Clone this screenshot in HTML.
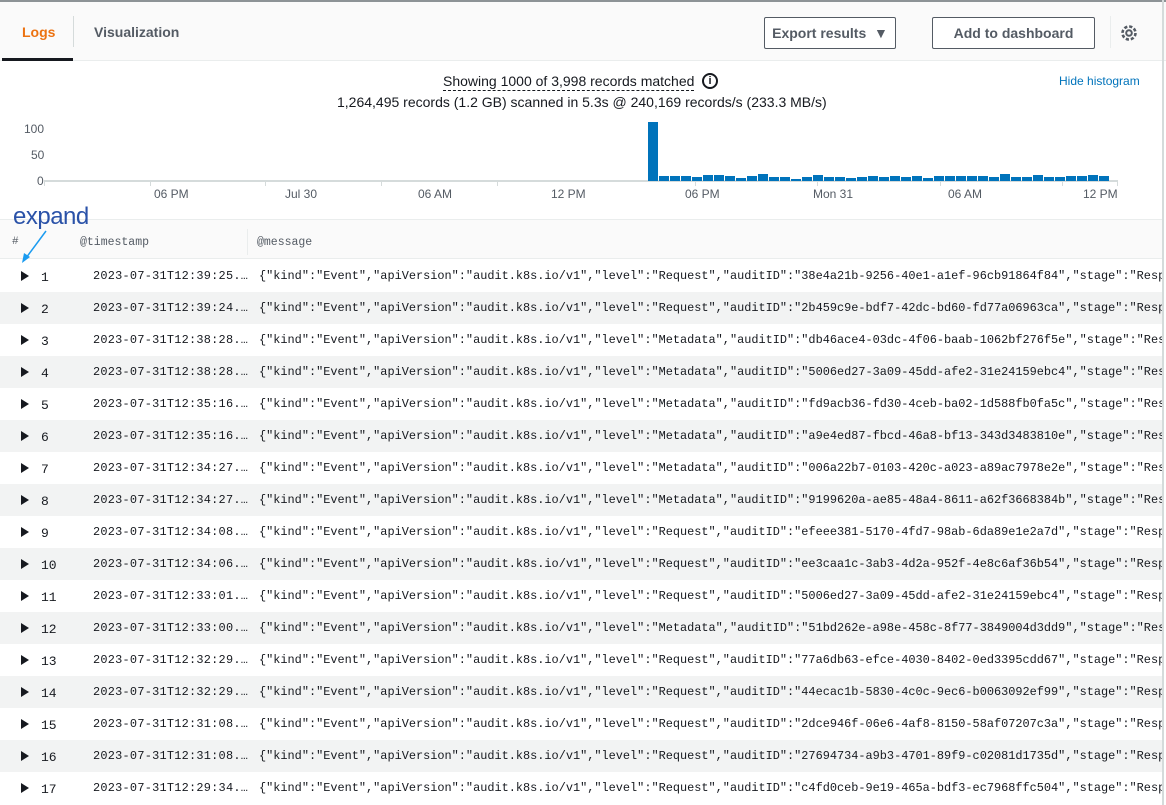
<!DOCTYPE html>
<html><head><meta charset="utf-8"><style>
*{margin:0;padding:0;box-sizing:border-box}
body{width:1166px;height:805px;overflow:hidden;background:#fff;font-family:"Liberation Sans",sans-serif;color:#16191f;position:relative}
.top{position:absolute;left:0;top:0;width:1166px;height:61px;background:#fafafa;border-top:2px solid #8d9396;border-bottom:1px solid #eaeded}
.tab{position:absolute;top:22px;font-weight:bold;font-size:14px}
.btn{position:absolute;top:15px;height:32px;border:1px solid #545b64;border-radius:2px;background:#fff;font-weight:bold;font-size:14px;color:#545b64;text-align:center;line-height:30px}
.mono{font-family:"Liberation Mono",monospace;font-size:11.9px;color:#16191f}
.row{position:absolute;left:0;width:1162px;height:32px;overflow:hidden;white-space:nowrap}
.row.g{background:#f2f3f3}
.row .tri{position:absolute;left:21px;top:11px;width:0;height:0;border-left:8px solid #16191f;border-top:5px solid transparent;border-bottom:5px solid transparent}
.row .n{position:absolute;left:41px;top:10px;font-size:13px;color:#16191f}
.row .ts{position:absolute;left:93px;top:9px;letter-spacing:0.25px}
.row .msg{position:absolute;left:259px;top:9px}
.ax{position:absolute;font-size:12px;color:#545b64}
</style></head><body>
<div class="top">
 <div class="tab" style="left:22px;color:#ec7211">Logs</div>
 <div style="position:absolute;left:73px;top:14px;width:1px;height:31px;background:#d5dbdb"></div>
 <div class="tab" style="left:94px;color:#545b64">Visualization</div>
 <div style="position:absolute;left:2px;top:56px;width:71px;height:3px;background:#16191f"></div>
 <div class="btn" style="left:764px;width:132px">Export results &nbsp;▼</div>
 <div class="btn" style="left:932px;width:163px">Add to dashboard</div>
 <div style="position:absolute;left:1110px;top:14px;width:1px;height:32px;background:#eaeded"></div>
 <svg style="position:absolute;left:1119px;top:21px" width="20" height="20" viewBox="0 0 20 20"><circle cx="10" cy="10" r="2.8" fill="none" stroke="#545b64" stroke-width="2"/><circle cx="10" cy="10" r="6.5" fill="none" stroke="#545b64" stroke-width="2.6" stroke-dasharray="3.2 1.9"/></svg>
</div>
<div style="position:absolute;left:1162px;top:0;width:2px;height:805px;background:#d5dbdb"></div>
<div style="position:absolute;left:443px;top:73px;font-size:14px;border-bottom:1px dashed #16191f;line-height:17px">Showing 1000 of 3,998 records matched</div>
<div style="position:absolute;left:702px;top:73px;width:16px;height:16px;border:2px solid #16191f;border-radius:50%;font-size:11px;font-weight:bold;text-align:center;line-height:12px">i</div>
<div style="position:absolute;left:337px;top:94px;font-size:14px">1,264,495 records (1.2 GB) scanned in 5.3s @ 240,169 records/s (233.3 MB/s)</div>
<div style="position:absolute;left:1059px;top:74px;font-size:12px;color:#0073bb">Hide histogram</div>
<div class="ax" style="left:24px;top:122px">100</div>
<div class="ax" style="left:31px;top:148px">50</div>
<div class="ax" style="left:37px;top:174px">0</div>
<svg style="position:absolute;left:0;top:110px" width="1166" height="100">
<line x1="44" y1="71" x2="1118" y2="71" stroke="#d5dbdb" stroke-width="2"/>
<g stroke="#d5dbdb" stroke-width="1"><line x1="44.5" y1="71" x2="44.5" y2="76"/><line x1="150.5" y1="71" x2="150.5" y2="76"/><line x1="265.5" y1="71" x2="265.5" y2="76"/><line x1="381.5" y1="71" x2="381.5" y2="76"/><line x1="497.5" y1="71" x2="497.5" y2="76"/><line x1="695.5" y1="71" x2="695.5" y2="76"/><line x1="817.5" y1="71" x2="817.5" y2="76"/><line x1="940.5" y1="71" x2="940.5" y2="76"/><line x1="1062.5" y1="71" x2="1062.5" y2="76"/><line x1="1117.5" y1="71" x2="1117.5" y2="76"/></g>
<g fill="#0073bb">
<rect x="648" y="12" width="10" height="59"/>
<rect x="659" y="66" width="10" height="5"/><rect x="670" y="66" width="10" height="5"/><rect x="681" y="66" width="10" height="5"/><rect x="692" y="67" width="10" height="4"/><rect x="703" y="65" width="10" height="6"/><rect x="714" y="65" width="10" height="6"/><rect x="725" y="66" width="10" height="5"/><rect x="736" y="68" width="10" height="3"/><rect x="747" y="66" width="10" height="5"/><rect x="758" y="64" width="10" height="7"/><rect x="769" y="67" width="10" height="4"/><rect x="780" y="67" width="10" height="4"/><rect x="791" y="69" width="10" height="2"/><rect x="802" y="67" width="10" height="4"/><rect x="813" y="65" width="10" height="6"/><rect x="824" y="67" width="10" height="4"/><rect x="835" y="67" width="10" height="4"/><rect x="846" y="68" width="10" height="3"/><rect x="857" y="67" width="10" height="4"/><rect x="868" y="66" width="10" height="5"/><rect x="879" y="67" width="10" height="4"/><rect x="890" y="66" width="10" height="5"/><rect x="901" y="67" width="10" height="4"/><rect x="912" y="66" width="10" height="5"/><rect x="923" y="68" width="10" height="3"/><rect x="934" y="66" width="10" height="5"/><rect x="945" y="66" width="10" height="5"/><rect x="956" y="66" width="10" height="5"/><rect x="967" y="66" width="10" height="5"/><rect x="978" y="66" width="10" height="5"/><rect x="989" y="67" width="10" height="4"/><rect x="1000" y="64" width="10" height="7"/><rect x="1011" y="67" width="10" height="4"/><rect x="1022" y="67" width="10" height="4"/><rect x="1033" y="65" width="10" height="6"/><rect x="1044" y="67" width="10" height="4"/><rect x="1055" y="67" width="10" height="4"/><rect x="1066" y="66" width="10" height="5"/><rect x="1077" y="66" width="10" height="5"/><rect x="1088" y="65" width="10" height="6"/><rect x="1099" y="66" width="10" height="5"/>
</g></svg>
<div class="ax" style="left:154px;top:187px">06 PM</div>
<div class="ax" style="left:285px;top:187px">Jul 30</div>
<div class="ax" style="left:418px;top:187px">06 AM</div>
<div class="ax" style="left:551px;top:187px">12 PM</div>
<div class="ax" style="left:685px;top:187px">06 PM</div>
<div class="ax" style="left:813px;top:187px">Mon 31</div>
<div class="ax" style="left:948px;top:187px">06 AM</div>
<div class="ax" style="left:1083px;top:187px">12 PM</div>
<div style="position:absolute;left:0;top:219px;width:1162px;height:40px;background:#fafafa;border-top:1px solid #eaeded;border-bottom:1px solid #eaeded"></div>
<div class="mono" style="position:absolute;left:12px;top:236px;font-size:11px;color:#545b64">#</div>
<div class="mono" style="position:absolute;left:80px;top:236px;font-size:11.5px;color:#545b64">@timestamp</div>
<div style="position:absolute;left:247px;top:229px;width:1px;height:26px;background:#eaeded"></div>
<div class="mono" style="position:absolute;left:257px;top:236px;font-size:11.5px;color:#545b64">@message</div>
<div style="position:absolute;left:13px;top:203px;font-size:24px;color:#2a52a8;letter-spacing:-0.5px">expand</div>
<svg style="position:absolute;left:15px;top:226px" width="40" height="40"><line x1="31" y1="5" x2="11" y2="32" stroke="#1a9bf0" stroke-width="1.5"/><polygon points="7,37 9,27 15,31" fill="#1a9bf0"/></svg>

<div class="row mono" style="top:260px"><div class="tri"></div><div class="n">1</div><div class="ts">2023-07-31T12:39:25.…</div><div class="msg">{"kind":"Event","apiVersion":"audit.k8s.io/v1","level":"Request","auditID":"38e4a21b-9256-40e1-a1ef-96cb91864f84","stage":"ResponseComplete"}</div></div>
<div class="row mono g" style="top:292px"><div class="tri"></div><div class="n">2</div><div class="ts">2023-07-31T12:39:24.…</div><div class="msg">{"kind":"Event","apiVersion":"audit.k8s.io/v1","level":"Request","auditID":"2b459c9e-bdf7-42dc-bd60-fd77a06963ca","stage":"ResponseComplete"}</div></div>
<div class="row mono" style="top:324px"><div class="tri"></div><div class="n">3</div><div class="ts">2023-07-31T12:38:28.…</div><div class="msg">{"kind":"Event","apiVersion":"audit.k8s.io/v1","level":"Metadata","auditID":"db46ace4-03dc-4f06-baab-1062bf276f5e","stage":"ResponseComplete"}</div></div>
<div class="row mono g" style="top:356px"><div class="tri"></div><div class="n">4</div><div class="ts">2023-07-31T12:38:28.…</div><div class="msg">{"kind":"Event","apiVersion":"audit.k8s.io/v1","level":"Metadata","auditID":"5006ed27-3a09-45dd-afe2-31e24159ebc4","stage":"ResponseComplete"}</div></div>
<div class="row mono" style="top:388px"><div class="tri"></div><div class="n">5</div><div class="ts">2023-07-31T12:35:16.…</div><div class="msg">{"kind":"Event","apiVersion":"audit.k8s.io/v1","level":"Metadata","auditID":"fd9acb36-fd30-4ceb-ba02-1d588fb0fa5c","stage":"ResponseComplete"}</div></div>
<div class="row mono g" style="top:420px"><div class="tri"></div><div class="n">6</div><div class="ts">2023-07-31T12:35:16.…</div><div class="msg">{"kind":"Event","apiVersion":"audit.k8s.io/v1","level":"Metadata","auditID":"a9e4ed87-fbcd-46a8-bf13-343d3483810e","stage":"ResponseComplete"}</div></div>
<div class="row mono" style="top:452px"><div class="tri"></div><div class="n">7</div><div class="ts">2023-07-31T12:34:27.…</div><div class="msg">{"kind":"Event","apiVersion":"audit.k8s.io/v1","level":"Metadata","auditID":"006a22b7-0103-420c-a023-a89ac7978e2e","stage":"ResponseComplete"}</div></div>
<div class="row mono g" style="top:484px"><div class="tri"></div><div class="n">8</div><div class="ts">2023-07-31T12:34:27.…</div><div class="msg">{"kind":"Event","apiVersion":"audit.k8s.io/v1","level":"Metadata","auditID":"9199620a-ae85-48a4-8611-a62f3668384b","stage":"ResponseComplete"}</div></div>
<div class="row mono" style="top:516px"><div class="tri"></div><div class="n">9</div><div class="ts">2023-07-31T12:34:08.…</div><div class="msg">{"kind":"Event","apiVersion":"audit.k8s.io/v1","level":"Request","auditID":"efeee381-5170-4fd7-98ab-6da89e1e2a7d","stage":"ResponseComplete"}</div></div>
<div class="row mono g" style="top:548px"><div class="tri"></div><div class="n">10</div><div class="ts">2023-07-31T12:34:06.…</div><div class="msg">{"kind":"Event","apiVersion":"audit.k8s.io/v1","level":"Request","auditID":"ee3caa1c-3ab3-4d2a-952f-4e8c6af36b54","stage":"ResponseComplete"}</div></div>
<div class="row mono" style="top:580px"><div class="tri"></div><div class="n">11</div><div class="ts">2023-07-31T12:33:01.…</div><div class="msg">{"kind":"Event","apiVersion":"audit.k8s.io/v1","level":"Request","auditID":"5006ed27-3a09-45dd-afe2-31e24159ebc4","stage":"ResponseComplete"}</div></div>
<div class="row mono g" style="top:612px"><div class="tri"></div><div class="n">12</div><div class="ts">2023-07-31T12:33:00.…</div><div class="msg">{"kind":"Event","apiVersion":"audit.k8s.io/v1","level":"Metadata","auditID":"51bd262e-a98e-458c-8f77-3849004d3dd9","stage":"ResponseComplete"}</div></div>
<div class="row mono" style="top:644px"><div class="tri"></div><div class="n">13</div><div class="ts">2023-07-31T12:32:29.…</div><div class="msg">{"kind":"Event","apiVersion":"audit.k8s.io/v1","level":"Request","auditID":"77a6db63-efce-4030-8402-0ed3395cdd67","stage":"ResponseComplete"}</div></div>
<div class="row mono g" style="top:676px"><div class="tri"></div><div class="n">14</div><div class="ts">2023-07-31T12:32:29.…</div><div class="msg">{"kind":"Event","apiVersion":"audit.k8s.io/v1","level":"Request","auditID":"44ecac1b-5830-4c0c-9ec6-b0063092ef99","stage":"ResponseComplete"}</div></div>
<div class="row mono" style="top:708px"><div class="tri"></div><div class="n">15</div><div class="ts">2023-07-31T12:31:08.…</div><div class="msg">{"kind":"Event","apiVersion":"audit.k8s.io/v1","level":"Request","auditID":"2dce946f-06e6-4af8-8150-58af07207c3a","stage":"ResponseComplete"}</div></div>
<div class="row mono g" style="top:740px"><div class="tri"></div><div class="n">16</div><div class="ts">2023-07-31T12:31:08.…</div><div class="msg">{"kind":"Event","apiVersion":"audit.k8s.io/v1","level":"Request","auditID":"27694734-a9b3-4701-89f9-c02081d1735d","stage":"ResponseComplete"}</div></div>
<div class="row mono" style="top:772px"><div class="tri"></div><div class="n">17</div><div class="ts">2023-07-31T12:29:34.…</div><div class="msg">{"kind":"Event","apiVersion":"audit.k8s.io/v1","level":"Request","auditID":"c4fd0ceb-9e19-465a-bdf3-ec7968ffc504","stage":"ResponseComplete"}</div></div>
</body></html>
